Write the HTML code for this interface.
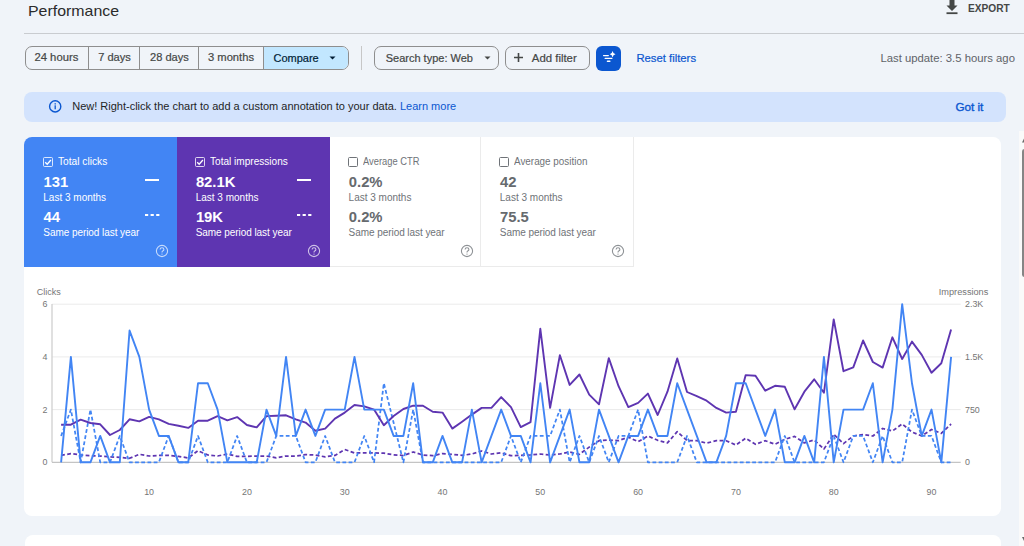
<!DOCTYPE html>
<html><head><meta charset="utf-8">
<style>
*{box-sizing:border-box;margin:0;padding:0}
html,body{width:1024px;height:546px;overflow:hidden;background:#f0f4f9;font-family:"Liberation Sans",sans-serif;position:relative}
.abs{position:absolute;white-space:nowrap}
.t{position:absolute;white-space:nowrap;line-height:1}
.tb{-webkit-text-stroke:0.2px currentColor}
.seg{position:absolute;top:0;height:100%;border-left:1px solid #8e8e8e}
.tile{position:absolute;top:137px;height:130px}
.tile .cb{position:absolute;left:18px;top:20px;width:10px;height:10px;border:1px solid #fff;border-radius:1.5px}
</style></head><body>

<!-- header -->
<div class="t" style="left:28px;top:2.6px;font-size:15px;color:#2b2b2b;transform:scaleX(1.06);transform-origin:0 0">Performance</div>
<svg class="abs" style="left:945px;top:0px" width="14" height="15" viewBox="0 0 14 15">
  <path d="M4.5 0 H9.5 V5.5 H12.5 L7 11 L1.5 5.5 H4.5 Z" fill="#444746"/>
  <rect x="1.5" y="12.3" width="11" height="1.8" fill="#444746"/>
</svg>
<div class="t" style="left:967.5px;top:2.5px;font-size:11.8px;color:#444746;font-weight:bold;transform:scaleX(0.86);transform-origin:0 0">EXPORT</div>
<div class="abs" style="left:24px;top:33px;width:1000px;height:1px;background:#c9ccd0"></div>

<!-- toolbar -->
<div class="abs" style="left:24.5px;top:46px;width:324px;height:24px;border:1px solid #8e8e8e;border-radius:7px;overflow:hidden">
  <div class="seg" style="left:62px;"></div>
  <div class="seg" style="left:113px;"></div>
  <div class="seg" style="left:172px;"></div>
  <div class="abs" style="left:237px;top:0;width:100px;height:100%;background:#c2e7ff;border-left:1px solid #8e8e8e"></div>
</div>
<div class="t tb" style="left:34.4px;top:52.4px;font-size:11.3px;color:#444746">24 hours</div>
<div class="t tb" style="left:98.2px;top:52.4px;font-size:11.1px;color:#444746">7 days</div>
<div class="t tb" style="left:150px;top:52.4px;font-size:11.1px;color:#444746">28 days</div>
<div class="t tb" style="left:208px;top:52.4px;font-size:11.2px;color:#444746">3 months</div>
<div class="t tb" style="left:273.5px;top:52.6px;font-size:11px;color:#001d35">Compare</div>
<svg class="abs" style="left:329px;top:56px" width="8" height="4"><path d="M0.5 0.5 L6.5 0.5 L3.5 3.5Z" fill="#001d35"/></svg>
<div class="abs" style="left:361px;top:46px;width:1px;height:24px;background:#c7c7c7"></div>

<div class="abs" style="left:373.5px;top:46px;width:125px;height:24px;border:1px solid #8e8e8e;border-radius:7px"></div>
<div class="t tb" style="left:385.7px;top:52.6px;font-size:11px;color:#444746">Search type: Web</div>
<svg class="abs" style="left:483.5px;top:56px" width="8" height="4"><path d="M0.5 0.5 L6.5 0.5 L3.5 3.5Z" fill="#444746"/></svg>

<div class="abs" style="left:505px;top:46px;width:85px;height:24px;border:1px solid #8e8e8e;border-radius:7px"></div>
<svg class="abs" style="left:513px;top:52px" width="12" height="12"><path d="M5.5 1 V10 M1 5.5 H10" stroke="#444746" stroke-width="1.6"/></svg>
<div class="t tb" style="left:531.8px;top:52.6px;font-size:11.4px;color:#444746">Add filter</div>

<div class="abs" style="left:596px;top:46px;width:25px;height:25px;background:#0b57d0;border-radius:6px"></div>
<svg class="abs" style="left:596px;top:46px" width="25" height="25" viewBox="0 0 25 25">
  <path d="M7.6 9.6 H12.3 M9.2 12.4 H15.8 M11.4 15.2 H13.9" stroke="#fff" stroke-width="1.35" stroke-linecap="round"/>
  <path d="M16.6 5 Q17 7.8 19.5 8.2 Q17 8.6 16.6 11.4 Q16.2 8.6 13.7 8.2 Q16.2 7.8 16.6 5Z" fill="#fff"/>
</svg>
<div class="t tb" style="left:636.4px;top:52.6px;font-size:11.3px;color:#0b57d0">Reset filters</div>
<div class="t" style="left:880.5px;top:53.2px;font-size:11.3px;color:#5f6368">Last update: 3.5 hours ago</div>

<!-- banner -->
<div class="abs" style="left:24.4px;top:92px;width:981.6px;height:30px;background:#d3e3fd;border-radius:8px"></div>
<svg class="abs" style="left:48px;top:99px" width="15" height="15" viewBox="0 0 15 15">
  <circle cx="7.2" cy="7.4" r="5.6" fill="none" stroke="#0b57d0" stroke-width="1.4"/>
  <rect x="6.55" y="6.3" width="1.3" height="4" fill="#0b57d0"/>
  <rect x="6.55" y="4.2" width="1.3" height="1.3" fill="#0b57d0"/>
</svg>
<div class="t" style="left:72.2px;top:100.7px;font-size:11px;color:#1f1f1f">New! Right-click the chart to add a custom annotation to your data. <span style="color:#0b57d0">Learn more</span></div>
<div class="t" style="left:955.4px;top:101px;font-size:11.7px;color:#0b57d0;-webkit-text-stroke:0.35px #0b57d0">Got it</div>

<!-- card -->
<div class="abs" style="left:24.3px;top:137.4px;width:976.3px;height:379px;background:#fff;border-radius:8px;overflow:hidden">
  <div class="abs" style="left:0;top:0;width:152.5px;height:129.5px;background:#4285f4"></div>
  <div class="abs" style="left:152.5px;top:0;width:153px;height:129.5px;background:#5e35b1"></div>
  <div class="abs" style="left:305.5px;top:0;width:151px;height:129.5px;border-right:1px solid #ebebeb;border-bottom:1px solid #ebebeb"></div>
  <div class="abs" style="left:456.5px;top:0;width:153px;height:129.5px;border-right:1px solid #ebebeb;border-bottom:1px solid #ebebeb"></div>
</div>
<div class="abs" style="left:24.5px;top:535px;width:976px;height:40px;background:#fff;border-radius:8px"></div>

<!-- tiles text -->
<div class="abs" style="left:42.8px;top:157px;width:10px;height:10px;border:1.2px solid rgba(255,255,255,0.8);border-radius:1.5px"></div>
<svg class="abs" style="left:42.8px;top:157px" width="10" height="10" viewBox="0 0 10 10"><path d="M2.2 5.2 L4.2 7.2 L7.9 3" fill="none" stroke="#fff" stroke-width="1.3"/></svg>
<div class="t" style="left:57.8px;top:157px;font-size:10.3px;color:#fff;transform:scaleX(0.99);transform-origin:0 0">Total clicks</div>
<div class="t" style="left:43.5px;top:175.4px;font-size:14.8px;font-weight:bold;color:#fff">131</div>
<div class="t" style="left:43.3px;top:193.1px;font-size:10px;color:#fff">Last 3 months</div>
<div class="t" style="left:43.5px;top:210px;font-size:14.8px;font-weight:bold;color:#fff">44</div>
<div class="t" style="left:43.3px;top:228.2px;font-size:10px;letter-spacing:-0.06px;color:#fff">Same period last year</div>
<div class="abs" style="left:144.7px;top:178.9px;width:14.2px;height:1.8px;background:#fff"></div>
<svg class="abs" style="left:144.7px;top:213.5px" width="15" height="2"><line x1="0" y1="1" x2="14.5" y2="1" stroke="#fff" stroke-width="1.8" stroke-dasharray="3.2 2.4"/></svg>
<svg class="abs" style="left:154.5px;top:243.8px" width="14" height="14" viewBox="0 0 14 14"><circle cx="7" cy="7" r="5.6" fill="none" stroke="rgba(255,255,255,0.7)" stroke-width="1.1"/><path d="M5.1 5.6 Q5.1 3.7 7 3.7 Q8.9 3.7 8.9 5.4 Q8.9 6.4 7.7 7 Q7 7.4 7 8.4" fill="none" stroke="rgba(255,255,255,0.7)" stroke-width="1.1"/><circle cx="7" cy="10.1" r="0.7" fill="rgba(255,255,255,0.7)"/></svg>
<div class="abs" style="left:195.2px;top:157px;width:10px;height:10px;border:1.2px solid rgba(255,255,255,0.8);border-radius:1.5px"></div>
<svg class="abs" style="left:195.2px;top:157px" width="10" height="10" viewBox="0 0 10 10"><path d="M2.2 5.2 L4.2 7.2 L7.9 3" fill="none" stroke="#fff" stroke-width="1.3"/></svg>
<div class="t" style="left:210.2px;top:157px;font-size:10.3px;color:#fff;transform:scaleX(0.978);transform-origin:0 0">Total impressions</div>
<div class="t" style="left:195.9px;top:175.4px;font-size:14.8px;font-weight:bold;color:#fff">82.1K</div>
<div class="t" style="left:195.7px;top:193.1px;font-size:10px;color:#fff">Last 3 months</div>
<div class="t" style="left:195.9px;top:210px;font-size:14.8px;font-weight:bold;color:#fff">19K</div>
<div class="t" style="left:195.7px;top:228.2px;font-size:10px;letter-spacing:-0.06px;color:#fff">Same period last year</div>
<div class="abs" style="left:297.1px;top:178.9px;width:14.2px;height:1.8px;background:#fff"></div>
<svg class="abs" style="left:297.1px;top:213.5px" width="15" height="2"><line x1="0" y1="1" x2="14.5" y2="1" stroke="#fff" stroke-width="1.8" stroke-dasharray="3.2 2.4"/></svg>
<svg class="abs" style="left:306.9px;top:243.8px" width="14" height="14" viewBox="0 0 14 14"><circle cx="7" cy="7" r="5.6" fill="none" stroke="rgba(255,255,255,0.7)" stroke-width="1.1"/><path d="M5.1 5.6 Q5.1 3.7 7 3.7 Q8.9 3.7 8.9 5.4 Q8.9 6.4 7.7 7 Q7 7.4 7 8.4" fill="none" stroke="rgba(255,255,255,0.7)" stroke-width="1.1"/><circle cx="7" cy="10.1" r="0.7" fill="rgba(255,255,255,0.7)"/></svg>
<div class="abs" style="left:348.1px;top:157px;width:10px;height:10px;border:1.2px solid #6f7378;border-radius:1.5px"></div>
<div class="t" style="left:363.1px;top:157px;font-size:10.3px;color:#6f7378;transform:scaleX(0.907);transform-origin:0 0">Average CTR</div>
<div class="t" style="left:348.8px;top:175.4px;font-size:14.8px;font-weight:bold;color:#666a6e">0.2%</div>
<div class="t" style="left:348.6px;top:193.1px;font-size:10px;color:#6f7378">Last 3 months</div>
<div class="t" style="left:348.8px;top:210px;font-size:14.8px;font-weight:bold;color:#666a6e">0.2%</div>
<div class="t" style="left:348.6px;top:228.2px;font-size:10px;letter-spacing:-0.06px;color:#6f7378">Same period last year</div>
<svg class="abs" style="left:459.8px;top:243.8px" width="14" height="14" viewBox="0 0 14 14"><circle cx="7" cy="7" r="5.6" fill="none" stroke="#8e9296" stroke-width="1.1"/><path d="M5.1 5.6 Q5.1 3.7 7 3.7 Q8.9 3.7 8.9 5.4 Q8.9 6.4 7.7 7 Q7 7.4 7 8.4" fill="none" stroke="#8e9296" stroke-width="1.1"/><circle cx="7" cy="10.1" r="0.7" fill="#8e9296"/></svg>
<div class="abs" style="left:499.3px;top:157px;width:10px;height:10px;border:1.2px solid #6f7378;border-radius:1.5px"></div>
<div class="t" style="left:514.3px;top:157px;font-size:10.3px;color:#6f7378;transform:scaleX(0.959);transform-origin:0 0">Average position</div>
<div class="t" style="left:500.0px;top:175.4px;font-size:14.8px;font-weight:bold;color:#666a6e">42</div>
<div class="t" style="left:499.8px;top:193.1px;font-size:10px;color:#6f7378">Last 3 months</div>
<div class="t" style="left:500.0px;top:210px;font-size:14.8px;font-weight:bold;color:#666a6e">75.5</div>
<div class="t" style="left:499.8px;top:228.2px;font-size:10px;letter-spacing:-0.06px;color:#6f7378">Same period last year</div>
<svg class="abs" style="left:611.0px;top:243.8px" width="14" height="14" viewBox="0 0 14 14"><circle cx="7" cy="7" r="5.6" fill="none" stroke="#8e9296" stroke-width="1.1"/><path d="M5.1 5.6 Q5.1 3.7 7 3.7 Q8.9 3.7 8.9 5.4 Q8.9 6.4 7.7 7 Q7 7.4 7 8.4" fill="none" stroke="#8e9296" stroke-width="1.1"/><circle cx="7" cy="10.1" r="0.7" fill="#8e9296"/></svg>

<svg class="abs" style="left:0;top:0" width="1024" height="546" viewBox="0 0 1024 546">
<line x1="52" y1="304.2" x2="960.7" y2="304.2" stroke="#ebebeb" stroke-width="1"/><line x1="52" y1="356.9" x2="960.7" y2="356.9" stroke="#ebebeb" stroke-width="1"/><line x1="52" y1="409.6" x2="960.7" y2="409.6" stroke="#ebebeb" stroke-width="1"/>
<line x1="52" y1="304" x2="52" y2="462.3" stroke="#d0d0d0" stroke-width="1.3"/>
<line x1="52" y1="462.3" x2="960.7" y2="462.3" stroke="#c4c4c4" stroke-width="1.2"/>
<polyline points="61.10,455.40 70.88,453.60 80.66,455.00 90.44,455.70 100.22,456.10 110.00,456.90 119.78,457.40 129.56,458.30 139.34,454.30 149.12,456.00 158.90,455.40 168.68,455.40 178.46,456.40 188.24,457.90 198.02,450.70 207.80,455.00 217.58,456.00 227.36,454.00 237.14,456.40 246.92,456.40 256.70,456.00 266.48,456.00 276.26,457.90 286.04,456.00 295.82,456.00 305.60,454.60 315.38,455.00 325.16,456.90 334.94,455.40 344.72,449.50 354.50,452.90 364.28,452.90 374.06,452.90 383.84,453.20 393.62,454.80 403.40,455.50 413.18,452.00 422.96,455.00 432.74,455.70 442.52,453.60 452.30,454.30 462.08,455.40 471.86,454.00 481.64,451.00 491.42,454.00 501.20,452.90 510.98,455.70 520.76,455.40 530.54,455.00 540.32,454.00 550.10,455.00 559.88,454.00 569.66,452.10 579.44,454.30 589.22,447.10 599.00,440.70 608.78,440.00 618.56,440.70 628.34,437.10 638.12,441.70 647.90,436.00 657.68,440.30 667.46,442.90 677.24,431.70 687.02,440.50 696.80,440.70 706.58,443.10 716.36,440.70 726.14,440.70 735.92,445.00 745.70,438.30 755.48,444.30 765.26,440.70 775.04,444.30 784.82,439.30 794.60,436.40 804.38,442.90 814.16,440.00 823.94,449.00 833.72,434.30 843.50,443.60 853.28,436.00 863.06,434.60 872.84,436.00 882.62,428.50 892.40,431.00 902.18,424.00 911.96,432.00 921.74,436.00 931.52,429.50 941.30,433.40 951.08,424.00" fill="none" stroke="#5e35b1" stroke-width="1.75" stroke-dasharray="3.8 2.4" stroke-linejoin="round"/>
<polyline points="61.10,435.95 70.88,409.60 80.66,462.30 90.44,409.60 100.22,462.30 110.00,462.30 119.78,435.95 129.56,462.30 139.34,462.30 149.12,462.30 158.90,462.30 168.68,435.95 178.46,462.30 188.24,462.30 198.02,435.95 207.80,462.30 217.58,462.30 227.36,462.30 237.14,435.95 246.92,462.30 256.70,462.30 266.48,462.30 276.26,435.95 286.04,435.95 295.82,435.95 305.60,462.30 315.38,462.30 325.16,435.95 334.94,462.30 344.72,462.30 354.50,462.30 364.28,435.95 374.06,462.30 383.84,383.25 393.62,422.77 403.40,462.30 413.18,409.60 422.96,462.30 432.74,462.30 442.52,462.30 452.30,462.30 462.08,462.30 471.86,462.30 481.64,462.30 491.42,462.30 501.20,462.30 510.98,435.95 520.76,462.30 530.54,435.95 540.32,435.95 550.10,435.95 559.88,409.60 569.66,462.30 579.44,435.95 589.22,462.30 599.00,435.95 608.78,462.30 618.56,435.95 628.34,435.95 638.12,409.60 647.90,462.30 657.68,462.30 667.46,462.30 677.24,462.30 687.02,435.95 696.80,462.30 706.58,462.30 716.36,462.30 726.14,462.30 735.92,462.30 745.70,462.30 755.48,462.30 765.26,462.30 775.04,462.30 784.82,435.95 794.60,462.30 804.38,462.30 814.16,462.30 823.94,462.30 833.72,435.95 843.50,462.30 853.28,435.95 863.06,435.95 872.84,462.30 882.62,435.95 892.40,462.30 902.18,462.30 911.96,409.60 921.74,435.95 931.52,435.95 941.30,462.30 951.08,462.30" fill="none" stroke="#4285f4" stroke-width="1.75" stroke-dasharray="3.8 2.4" stroke-linejoin="round"/>
<polyline points="61.10,424.70 70.88,424.70 80.66,419.70 90.44,423.00 100.22,424.30 110.00,435.00 119.78,430.00 129.56,419.30 139.34,421.40 149.12,416.90 158.90,419.30 168.68,423.90 178.46,425.70 188.24,427.90 198.02,420.70 207.80,420.70 217.58,416.10 227.36,420.40 237.14,417.10 246.92,425.00 256.70,427.40 266.48,416.10 276.26,415.70 286.04,415.30 295.82,419.30 305.60,422.60 315.38,430.70 325.16,428.60 334.94,418.60 344.72,412.60 354.50,405.00 364.28,406.40 374.06,409.60 383.84,425.30 393.62,416.00 403.40,409.00 413.18,405.70 422.96,405.70 432.74,411.70 442.52,412.60 452.30,428.60 462.08,421.70 471.86,414.60 481.64,407.90 491.42,407.90 501.20,397.10 510.98,407.10 520.76,427.10 530.54,422.10 540.32,328.80 550.10,407.90 559.88,355.20 569.66,384.90 579.44,374.50 589.22,394.60 599.00,404.30 608.78,358.10 618.56,386.20 628.34,407.10 638.12,402.90 647.90,393.60 657.68,415.00 667.46,391.70 677.24,358.50 687.02,392.00 696.80,396.20 706.58,400.70 716.36,407.90 726.14,412.60 735.92,411.70 745.70,375.10 755.48,375.70 765.26,390.70 775.04,385.80 784.82,386.80 794.60,409.30 804.38,391.70 814.16,379.30 823.94,392.70 833.72,319.40 843.50,371.20 853.28,367.30 863.06,340.50 872.84,362.00 882.62,367.60 892.40,337.30 902.18,359.00 911.96,341.60 921.74,354.90 931.52,372.70 941.30,363.30 951.08,329.60" fill="none" stroke="#5e35b1" stroke-width="1.9" stroke-linejoin="round"/>
<polyline points="61.10,462.30 70.88,356.90 80.66,462.30 90.44,462.30 100.22,435.95 110.00,462.30 119.78,462.30 129.56,330.55 139.34,356.90 149.12,409.60 158.90,435.95 168.68,435.95 178.46,462.30 188.24,462.30 198.02,383.25 207.80,383.25 217.58,409.60 227.36,462.30 237.14,462.30 246.92,462.30 256.70,462.30 266.48,409.60 276.26,435.95 286.04,356.90 295.82,435.95 305.60,409.60 315.38,435.95 325.16,409.60 334.94,409.60 344.72,409.60 354.50,356.90 364.28,409.60 374.06,409.60 383.84,409.60 393.62,435.95 403.40,435.95 413.18,383.25 422.96,462.30 432.74,462.30 442.52,435.95 452.30,462.30 462.08,462.30 471.86,409.60 481.64,462.30 491.42,435.95 501.20,409.60 510.98,435.95 520.76,435.95 530.54,462.30 540.32,383.25 550.10,462.30 559.88,435.95 569.66,409.60 579.44,462.30 589.22,462.30 599.00,409.60 608.78,435.95 618.56,462.30 628.34,435.95 638.12,435.95 647.90,409.60 657.68,435.95 667.46,435.95 677.24,383.25 687.02,409.60 696.80,435.95 706.58,462.30 716.36,462.30 726.14,435.95 735.92,383.25 745.70,383.25 755.48,409.60 765.26,435.95 775.04,409.60 784.82,462.30 794.60,462.30 804.38,435.95 814.16,462.30 823.94,356.90 833.72,462.30 843.50,409.60 853.28,409.60 863.06,409.60 872.84,383.25 882.62,462.30 892.40,409.60 902.18,304.20 911.96,383.25 921.74,435.95 931.52,409.60 941.30,462.30 951.08,356.90" fill="none" stroke="#4285f4" stroke-width="1.9" stroke-linejoin="round"/>
</svg>
<div class="t" style="right:976.5px;top:300.2px;font-size:8.9px;color:#757575;text-align:right">6</div>
<div class="t" style="right:976.5px;top:352.9px;font-size:8.9px;color:#757575;text-align:right">4</div>
<div class="t" style="right:976.5px;top:405.6px;font-size:8.9px;color:#757575;text-align:right">2</div>
<div class="t" style="right:976.5px;top:458.3px;font-size:8.9px;color:#757575;text-align:right">0</div>
<div class="t" style="left:965px;top:300.2px;font-size:8.9px;color:#757575">2.3K</div>
<div class="t" style="left:965px;top:352.9px;font-size:8.9px;color:#757575">1.5K</div>
<div class="t" style="left:965px;top:405.6px;font-size:8.9px;color:#757575">750</div>
<div class="t" style="left:965px;top:458.3px;font-size:8.9px;color:#757575">0</div>
<div class="t" style="left:144.1px;top:488px;font-size:8.9px;color:#757575;width:10px;text-align:center">10</div>
<div class="t" style="left:241.9px;top:488px;font-size:8.9px;color:#757575;width:10px;text-align:center">20</div>
<div class="t" style="left:339.7px;top:488px;font-size:8.9px;color:#757575;width:10px;text-align:center">30</div>
<div class="t" style="left:437.5px;top:488px;font-size:8.9px;color:#757575;width:10px;text-align:center">40</div>
<div class="t" style="left:535.3px;top:488px;font-size:8.9px;color:#757575;width:10px;text-align:center">50</div>
<div class="t" style="left:633.1px;top:488px;font-size:8.9px;color:#757575;width:10px;text-align:center">60</div>
<div class="t" style="left:730.9px;top:488px;font-size:8.9px;color:#757575;width:10px;text-align:center">70</div>
<div class="t" style="left:828.7px;top:488px;font-size:8.9px;color:#757575;width:10px;text-align:center">80</div>
<div class="t" style="left:926.5px;top:488px;font-size:8.9px;color:#757575;width:10px;text-align:center">90</div>
<div class="t" style="left:36.7px;top:288px;font-size:9px;color:#757575">Clicks</div>
<div class="t" style="left:938.8px;top:288px;font-size:9.2px;color:#757575">Impressions</div>

<!-- scrollbar -->
<div class="abs" style="left:1019px;top:131px;width:5px;height:415px;background:#fafafa"></div>
<div class="abs" style="left:1022px;top:148.7px;width:5px;height:128px;background:#858585;border-radius:3px"></div>
<svg class="abs" style="left:1021px;top:137px" width="3" height="6"><path d="M1 5.5 L3 1.5 L3 5.5Z" fill="#6a6a6a"/></svg>
<svg class="abs" style="left:1021px;top:536px" width="3" height="6"><path d="M1 1 L3 1 L3 5Z" fill="#6a6a6a"/></svg>
</body></html>
